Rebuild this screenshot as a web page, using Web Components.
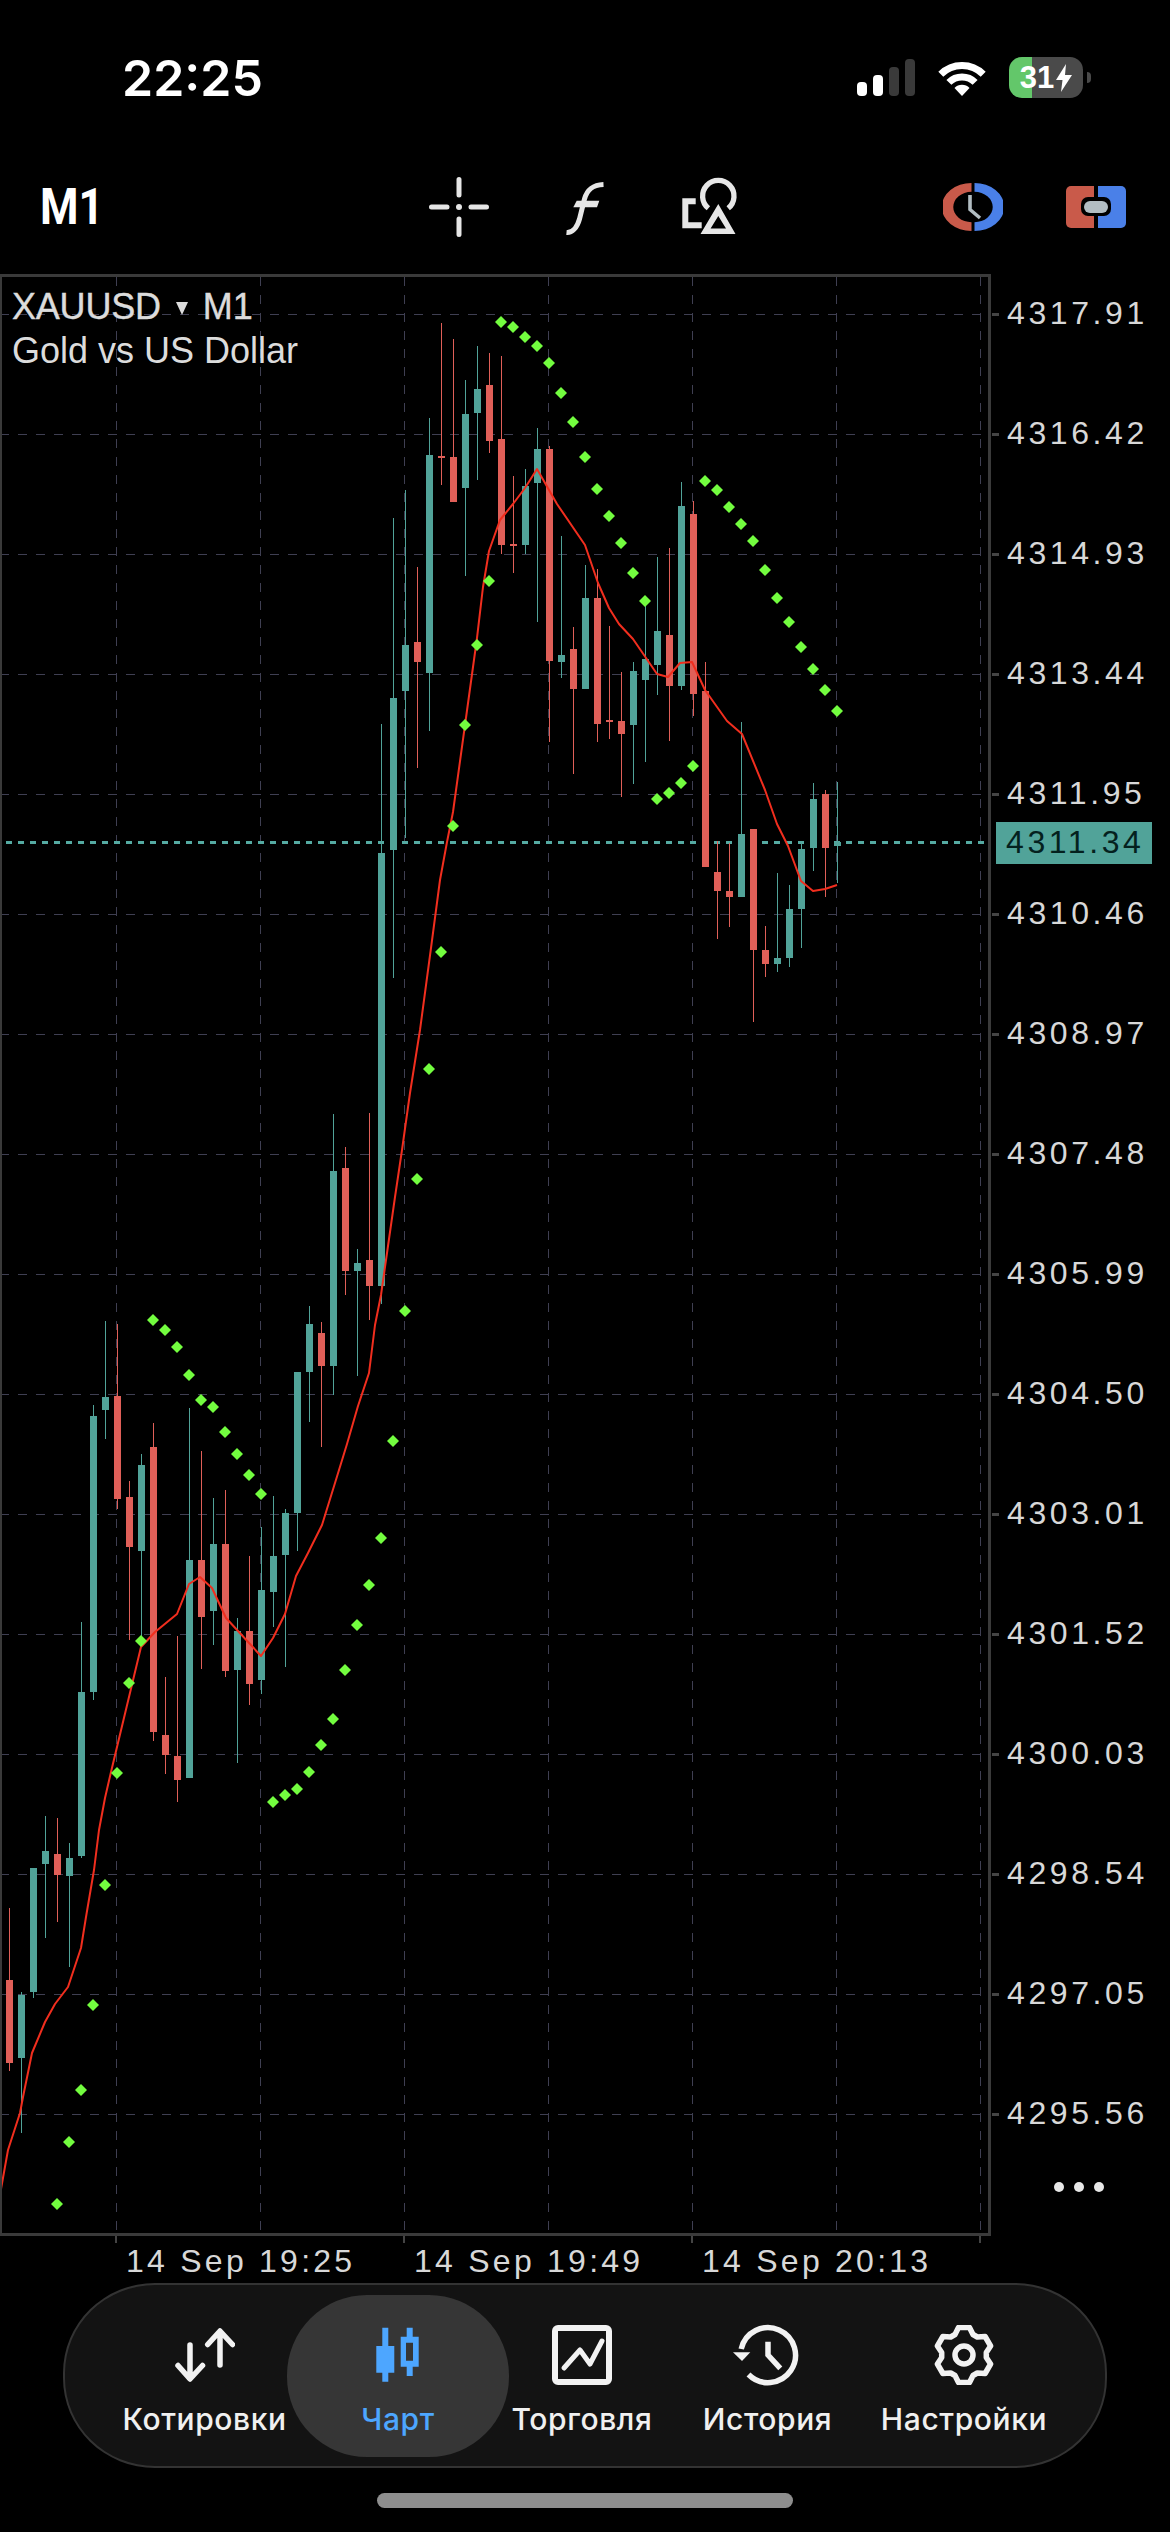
<!DOCTYPE html>
<html lang="ru">
<head>
<meta charset="utf-8">
<title>XAUUSD M1</title>
<style>
  html, body { margin: 0; background: #000; }
  body { width: 1170px; height: 2532px; overflow: hidden; display: flex; flex-direction: column; }
</style>
</head>
<body>
<mt-status-bar></mt-status-bar>
<mt-toolbar></mt-toolbar>
<mt-chart-row>
  <mt-chart symbol="XAUUSD" period="M1" description="Gold vs US Dollar"></mt-chart>
  <mt-price-axis current="4311.34"></mt-price-axis>
</mt-chart-row>
<mt-time-axis></mt-time-axis>
<mt-tab-bar>
  <mt-tab-item>
    <svg slot="icon" width="60" height="60" viewBox="0 0 60 60" fill="none" stroke="#f2f2f2" stroke-width="5.5" stroke-linecap="round" stroke-linejoin="round"><path d="M15 20V53M3 40.5L15 54L27.5 40.5M45 6.5V40M32.7 19.5L45 6L57.5 19.5"/></svg>
    Котировки
  </mt-tab-item>
  <mt-tab-item active>
    <svg slot="icon" width="60" height="60" viewBox="0 0 60 60" fill="#4da6ff"><path d="M14.3 2.7h6V21h6v26.7h-6v9h-6v-9h-6V21h6z"/><path fill-rule="evenodd" d="M38.7 2.7h6v9h6v30h-6V51h-6v-9.3h-6v-30h6zM38 17.7v18h7v-18z"/></svg>
    Чарт
  </mt-tab-item>
  <mt-tab-item>
    <svg slot="icon" width="60" height="60" viewBox="0 0 60 60" fill="none" stroke="#f2f2f2" stroke-linecap="round" stroke-linejoin="round"><rect x="3" y="3" width="54" height="54" rx="3" stroke-width="6"/><path d="M12 43L28 25L38 39L50 16" stroke-width="5"/></svg>
    Торговля
  </mt-tab-item>
  <mt-tab-item>
    <svg slot="icon" width="60" height="60" viewBox="0 0 60 60" style="overflow:visible" fill="none" stroke="#f2f2f2" stroke-width="5.5"><path d="M10.5 49.5A27.5 27.5 0 1 0 3.2 24"/><path d="M30 16.7V30L42.3 43.3"/><path d="M-5 27.3H12.3L4 36Z" fill="#f2f2f2" stroke="none"/></svg>
    История
  </mt-tab-item>
  <mt-tab-item>
    <mt-gear-icon slot="icon"></mt-gear-icon>
    Настройки
  </mt-tab-item>
</mt-tab-bar>
<mt-home-indicator></mt-home-indicator>

<script>
const FONT = '"Liberation Sans", Arial, sans-serif';

class MtStatusBar extends HTMLElement {
  constructor() {
    super();
    this.root = this.attachShadow({ mode: 'open' });
    this.root.innerHTML = `
      <style>
        :host {
          display: flex;
          align-items: center;
          justify-content: space-between;
          flex: none;
          height: 155px;
          padding: 0 79px 0 122px;
        }
        .time {
          font: 600 50px Inter, sans-serif;
          color: #fff;
        }
        .icons {
          display: flex;
          align-items: center;
          gap: 22px;
        }
        .battery-wrap {
          display: flex;
          align-items: center;
          gap: 4px;
        }
        .battery {
          display: flex;
          align-items: center;
          justify-content: center;
          gap: 2px;
          width: 74px;
          height: 41px;
          border-radius: 13px;
          background: linear-gradient(90deg, #63c76a 31%, #4a4a4a 31%);
          color: #fff;
          font: 700 31px ${FONT};
        }
        .nub {
          width: 4px;
          height: 11px;
          border-radius: 0 5px 5px 0;
          background: #4a4a4a;
        }
      </style>
      <div class="time">22:25</div>
      <div class="icons">
        <svg width="58" height="37" viewBox="0 0 58 37">
          <rect x="0" y="23" width="10" height="14" rx="4" fill="#fff"/>
          <rect x="16" y="16" width="10" height="21" rx="4" fill="#fff"/>
          <rect x="32" y="8" width="10" height="29" rx="4" fill="#3a3a3a"/>
          <rect x="48" y="0" width="10" height="37" rx="4" fill="#3a3a3a"/>
        </svg>
        <svg width="50" height="37" viewBox="0 0 50 37">
          <path d="M3.8 15.2A30 30 0 0 1 46.2 15.2" fill="none" stroke="#fff" stroke-width="7"/>
          <path d="M11.9 23.4A18.5 18.5 0 0 1 38.1 23.4" fill="none" stroke="#fff" stroke-width="7"/>
          <path d="M25 37L17.5 29A10.5 10.5 0 0 1 32.5 29Z" fill="#fff"/>
        </svg>
        <div class="battery-wrap">
          <div class="battery">
            <span>31</span>
            <svg width="16" height="28" viewBox="0 0 16 28"><path d="M10 0L0 16H6.5L5 28L16 11H9Z" fill="#fff"/></svg>
          </div>
          <div class="nub"></div>
        </div>
      </div>
    `;
  }
}

class MtToolbar extends HTMLElement {
  constructor() {
    super();
    this.root = this.attachShadow({ mode: 'open' });
    this.root.innerHTML = `
      <style>
        :host {
          display: flex;
          align-items: center;
          flex: none;
          height: 60px;
          padding: 22px 0 37px 40px;
        }
        .period {
          width: 60px;
          font: 700 50px Roboto, sans-serif;
          line-height: 60px;
          color: #fff;
          white-space: nowrap;
          transform: scaleX(.88);
          transform-origin: left center;
        }
        svg { display: block; flex: none; }
      </style>
      <div class="period">M1</div>
      <svg style="margin-left:329px" width="60" height="60" viewBox="0 0 60 60" fill="none" stroke="#e6e6e6" stroke-width="5" stroke-linecap="round">
        <path d="M30 2.5V18M30 42V57.5M2.5 30H18M42 30H57.5"/>
        <circle cx="30" cy="30" r="3" fill="#e6e6e6" stroke="none"/>
      </svg>
      <svg style="margin-left:76px" width="39" height="60" viewBox="154 0 39 60">
        <path d="M192.5 7.5C181 8 176 13 173.5 22L168.500 42C166 51 161 56 155.500 55.500" fill="none" stroke="#e6e6e6" stroke-width="5"/>
        <path d="M165.7 23.700H188.300L186 30.300H162.300Z" fill="#e6e6e6"/>
      </svg>
      <svg style="margin-left:78px" width="56" height="60" viewBox="272 0 56 60">
        <path d="M298.4 48.3A15.7 15.7 0 1 1 318.2 48.3" transform="translate(0 -17)" fill="none" stroke="#e6e6e6" stroke-width="5.3"/>
        <path d="M285.7 24.3H275.3V48.3H291.7" fill="none" stroke="#e6e6e6" stroke-width="6"/>
        <path fill-rule="evenodd" d="M308.3 27L325.5 57H290.5ZM308.3 39L300.6 51.5H316Z" fill="#e6e6e6"/>
      </svg>
      <svg style="margin-left:205px" width="60" height="60" viewBox="0 0 60 60">
        <path d="M28.5 6A29.7 24 0 0 0 28.5 54V45.2A18 15 0 0 1 28.5 14.8Z" fill="#c95a4a"/>
        <path d="M31.5 6A29.7 24 0 0 1 31.5 54V45.2A18 15 0 0 0 31.5 14.8Z" fill="#4a80e8"/>
        <path d="M27 18V32.5L37 41" fill="none" stroke="#b2bdc2" stroke-width="3.6"/>
      </svg>
      <svg style="margin-left:63px" width="60" height="60" viewBox="0 0 60 60">
        <path d="M5 9H28V51H5A5 5 0 0 1 0 46V14A5 5 0 0 1 5 9Z" fill="#c95a4a"/>
        <path d="M32 9H55A5 5 0 0 1 60 14V46A5 5 0 0 1 55 51H32Z" fill="#4a80e8"/>
        <rect x="15" y="20" width="30" height="19" rx="7" fill="#000"/>
        <rect x="18" y="24" width="24" height="12" rx="6" fill="#b2bdc2"/>
      </svg>
    `;
  }
}

class MtChartRow extends HTMLElement {
  constructor() {
    super();
    this.root = this.attachShadow({ mode: 'open' });
    this.root.innerHTML = `
      <style>
        :host {
          display: flex;
          flex: none;
          height: 1962px;
        }
      </style>
      <slot></slot>
    `;
  }
}

// [wick top, wick bottom, body top, body bottom, 'g'|'r'] in page pixels, one per bar
const CANDLES = [
  [1908,2071,1980,2063,'r'],[1992,2133,1995,2058,'g'],[1868,1998,1868,1992,'g'],[1816,1938,1851,1864,'g'],
  [1818,1922,1854,1875,'r'],[1843,1967,1858,1876,'g'],[1622,1858,1692,1856,'g'],[1405,1700,1416,1692,'g'],
  [1321,1439,1397,1410,'g'],[1324,1509,1396,1499,'r'],[1481,1640,1497,1547,'r'],[1454,1645,1465,1551,'g'],
  [1423,1741,1447,1732,'r'],[1677,1774,1735,1755,'r'],[1636,1802,1756,1780,'r'],[1408,1778,1560,1778,'g'],
  [1451,1669,1560,1617,'r'],[1498,1645,1544,1611,'g'],[1490,1677,1544,1671,'r'],[1618,1763,1631,1670,'g'],
  [1556,1705,1631,1684,'r'],[1527,1694,1590,1680,'g'],[1496,1627,1556,1592,'g'],[1509,1667,1513,1555,'g'],
  [1372,1551,1372,1513,'g'],[1306,1422,1324,1372,'g'],[1322,1447,1333,1366,'r'],[1114,1395,1171,1366,'g'],
  [1147,1295,1168,1271,'r'],[1249,1376,1263,1271,'g'],[1113,1320,1260,1286,'r'],[724,1304,853,1286,'g'],
  [518,978,698,850,'g'],[490,838,645,691,'g'],[567,768,642,662,'r'],[418,731,455,673,'g'],
  [323,485,456,458,'r'],[339,502,457,502,'r'],[380,576,414,488,'g'],[346,480,389,413,'g'],
  [353,453,385,441,'r'],[356,554,439,545,'r'],[476,573,544,546,'r'],[469,554,486,545,'g'],
  [428,622,449,483,'g'],[446,742,449,661,'r'],[536,678,655,662,'g'],[627,774,649,689,'r'],
  [565,689,598,689,'g'],[569,742,598,724,'r'],[626,739,720,722,'r'],[672,797,721,734,'r'],
  [662,784,671,725,'g'],[606,762,659,680,'g'],[557,695,631,665,'g'],[548,741,635,686,'r'],
  [482,690,506,686,'g'],[501,716,514,694,'r'],[662,867,691,867,'r'],[841,939,872,891,'r'],
  [843,927,891,897,'r'],[722,897,834,897,'g'],[829,1022,829,950,'r'],[926,977,950,964,'r'],
  [873,972,958,964,'g'],[885,967,909,958,'g'],[843,948,849,909,'g'],[783,871,799,848,'g'],
  [790,897,794,848,'r'],[782,883,842,846,'g']
];

const SAR = [
  [57,2204],[69,2142],[81,2090],[93,2005],[105,1885],[117,1773],[129,1683],[141,1641],
  [153,1320],[165,1330],[177,1347],[189,1375],[201,1400],[213,1407],[225,1432],[237,1454],[249,1475],[261,1494],
  [273,1802],[285,1795],[297,1789],[309,1772],[321,1745],[333,1719],[345,1670],[357,1625],[369,1585],[381,1538],
  [393,1441],[405,1311],[417,1179],[429,1069],[441,952],[453,826],[465,725],[477,645],[489,581],
  [501,322],[513,327],[525,337],[537,346],[549,363],[561,393],[573,422],[585,457],[597,489],[609,516],[621,543],[633,573],[645,601],
  [657,799],[669,793],[681,783],[693,766],
  [705,481],[717,490],[729,507],[741,524],[753,541],[765,570],[777,598],[789,622],[801,647],[813,669],[825,690],[837,711]
];

const MA = [
  [1,2189],[8,2150],[20,2113],[23,2097],[32,2053],[45,2022],[55,2004],[68,1987],[81,1948],[86,1917],[94,1870],[99,1830],
  [105,1798],[111,1772],[141,1647],[155,1632],[177,1614],[189,1584],[200,1577],[212,1588],[226,1618],[261,1656],[273,1638],
  [285,1614],[296,1576],[308,1553],[322,1525],[335,1483],[347,1444],[358,1406],[369,1373],[375,1325],[381,1295],[387,1253],
  [395,1197],[402,1150],[410,1093],[420,1030],[431,948],[440,880],[447,842],[453,812],[465,725],[477,638],[483,587],[489,551],
  [500,520],[513,504],[525,488],[537,469],[557,504],[585,545],[598,583],[609,608],[619,624],[633,639],[657,674],[668,677],
  [680,663],[692,662],[705,690],[727,721],[742,734],[765,790],[777,824],[788,846],[801,881],[813,891],[825,889],[837,885]
];

class MtChart extends HTMLElement {
  constructor() {
    super();
    this.root = this.attachShadow({ mode: 'open' });
    this.root.innerHTML = `
      <style>
        :host {
          display: block;
          position: relative;
          flex: none;
          width: 992px;
          height: 1962px;
        }
        svg { display: block; }
        .legend {
          position: absolute;
          left: 12px;
          top: 11px;
          font: 36px/44px ${FONT};
          color: #dcdcdc;
        }
        .symbol {
          display: flex;
          align-items: center;
          white-space: nowrap;
          -webkit-text-stroke: 0.4px #dcdcdc;
        }
        .name { letter-spacing: -0.2px; }
        .tri {
          width: 0;
          height: 0;
          margin: 3px 15px 0 15px;
          border-left: 6px solid transparent;
          border-right: 6px solid transparent;
          border-top: 13px solid #dcdcdc;
        }
      </style>
      <svg width="992" height="1962" viewBox="0 274 992 1962">${this.draw()}</svg>
      <div class="legend">
        <div class="symbol"><span class="name"></span><span class="tri"></span><span class="period"></span></div>
        <div class="description"></div>
      </div>
    `;
  }

  connectedCallback() {
    this.root.querySelector('.name').textContent = this.getAttribute('symbol');
    this.root.querySelector('.period').textContent = this.getAttribute('period');
    this.root.querySelector('.description').textContent = this.getAttribute('description');
  }

  draw() {
    let out = '<g stroke="#3f3f52" stroke-width="1" stroke-dasharray="9 9" fill="none">';
    for (let k = 0; k < 16; k++) {
      const y = 314.5 + 120 * k;
      out += `<path d="M0 ${y}H981"/>`;
    }
    for (let k = 0; k < 7; k++) {
      const x = 116.5 + 144 * k;
      out += `<path d="M${x} 277V2233"/>`;
    }
    out += '</g>';
    out += '<path d="M6 842.5H988" stroke="#55aaa2" stroke-width="3" stroke-dasharray="6 6" fill="none"/>';

    out += '<g shape-rendering="crispEdges">';
    CANDLES.forEach((c, i) => {
      const x = 9 + 12 * i;
      const fill = c[4] === 'g' ? '#51a399' : '#e05f58';
      out += `<rect x="${x}" y="${c[0]}" width="1" height="${c[1] - c[0]}" fill="${fill}"/>`;
      out += `<rect x="${x - 3}" y="${c[2]}" width="7" height="${Math.max(c[3] - c[2], 2)}" fill="${fill}"/>`;
    });
    out += '</g>';

    const line = MA.map(p => p.join(' ')).join('L');
    out += `<path d="M${line}" fill="none" stroke="#f12e1e" stroke-width="2" stroke-linejoin="round"/>`;

    SAR.forEach(([x, y]) => {
      out += `<path d="M${x} ${y - 6}L${x + 6} ${y}L${x} ${y + 6}L${x - 6} ${y}Z" fill="#73fd3f"/>`;
    });

    // frame on top of everything
    out += '<g fill="#3a3a3a" shape-rendering="crispEdges">';
    out += '<rect x="0" y="274" width="991" height="3"/>';
    out += '<rect x="0" y="2233" width="991" height="3"/>';
    out += '<rect x="0" y="274" width="2" height="1962"/>';
    out += '<rect x="988" y="274" width="3" height="1962"/>';
    out += '</g>';
    return out;
  }
}

class MtPriceAxis extends HTMLElement {
  constructor() {
    super();
    this.root = this.attachShadow({ mode: 'open' });
    this.root.innerHTML = `
      <style>
        :host {
          display: flex;
          flex-direction: column;
          flex: 1;
          position: relative;
          padding-top: 20px;
          font: 32px/40px ${FONT};
          letter-spacing: 3.6px;
          color: #d8d8d8;
        }
        .row {
          display: flex;
          align-items: center;
          height: 40px;
          margin-bottom: 80px;
        }
        .tick {
          width: 7px;
          height: 3px;
          margin-right: 8px;
          background: #444;
        }
        .value { margin-bottom: 3px; }
        .current {
          position: absolute;
          left: 4px;
          top: 548px;
          width: 146px;
          height: 42px;
          padding-left: 10px;
          background: #51a399;
          color: #04211e;
          line-height: 41px;
        }
        .more {
          display: flex;
          gap: 10px;
          margin: -32px 0 0 62px;
        }
        .more span {
          width: 10px;
          height: 10px;
          border-radius: 50%;
          background: #e8e8e8;
        }
      </style>
      <div class="rows"></div>
      <div class="current"></div>
      <div class="more"><span></span><span></span><span></span></div>
    `;
  }

  connectedCallback() {
    this.root.querySelector('.current').textContent = this.getAttribute('current');
    const rows = this.root.querySelector('.rows');
    for (let k = 0; k < 16; k++) {
      const row = document.createElement('div');
      row.className = 'row';
      row.innerHTML = `<span class="tick"></span><span class="value">${(4317.91 - 1.49 * k).toFixed(2)}</span>`;
      rows.appendChild(row);
    }
  }
}

class MtTimeAxis extends HTMLElement {
  constructor() {
    super();
    this.root = this.attachShadow({ mode: 'open' });
    this.root.innerHTML = `
      <style>
        :host {
          display: flex;
          flex: none;
          height: 47px;
          padding-left: 115px;
          font: 32px/36px ${FONT};
          letter-spacing: 3.25px;
          color: #d8d8d8;
        }
        .cell {
          flex: none;
          width: 288px;
          white-space: nowrap;
        }
        .cell:last-child { width: 2px; }
        .tick {
          width: 2px;
          height: 7px;
          background: #444;
        }
        .label {
          margin: 0 0 0 11px;
        }
      </style>
      <div class="cell"><div class="tick"></div><div class="label">14 Sep 19:25</div></div>
      <div class="cell"><div class="tick"></div><div class="label">14 Sep 19:49</div></div>
      <div class="cell"><div class="tick"></div><div class="label">14 Sep 20:13</div></div>
      <div class="cell"><div class="tick"></div></div>
    `;
  }
}

class MtTabBar extends HTMLElement {
  constructor() {
    super();
    this.root = this.attachShadow({ mode: 'open' });
    this.root.innerHTML = `
      <style>
        :host {
          display: grid;
          grid-template-columns: 165px 222px 146px 225px 168px;
          align-items: center;
          flex: none;
          box-sizing: border-box;
          width: 1044px;
          height: 185px;
          margin-left: 63px;
          padding-left: 57px;
          border: 2px solid #333;
          border-radius: 92px / 90px;
          background: #131313;
        }
      </style>
      <slot></slot>
    `;
  }
}

class MtTabItem extends HTMLElement {
  constructor() {
    super();
    this.root = this.attachShadow({ mode: 'open' });
    this.root.innerHTML = `
      <style>
        :host {
          display: flex;
          flex-direction: column;
          align-items: center;
          box-sizing: border-box;
          height: 162px;
          padding-top: 30px;
          border-radius: 80px;
          color: #f0f0f0;
          font: 500 30px/40px Inter, sans-serif;
          letter-spacing: 0.6px;
          white-space: nowrap;
        }
        :host([active]) {
          background: #363636;
          color: #4da6ff;
        }
        .icon {
          display: block;
          height: 60px;
          margin-bottom: 14px;
        }
      </style>
      <div class="icon"><slot name="icon"></slot></div>
      <slot></slot>
    `;
  }
}

class MtGearIcon extends HTMLElement {
  constructor() {
    super();
    this.root = this.attachShadow({ mode: 'open' });
    const pts = [];
    for (let t = 0; t < 6; t++) {
      const a = (-90 + 60 * t) * Math.PI / 180;
      const at = (r, w) => [
        30 + r * Math.cos(a) - w * Math.sin(a),
        30 + r * Math.sin(a) + w * Math.cos(a)
      ].map(n => n.toFixed(1)).join(' ');
      pts.push(at(20.5, -9), at(27.5, -5.5), at(27.5, 5.5), at(20.5, 9));
    }
    this.root.innerHTML = `
      <style>
        :host { display: block; width: 60px; height: 60px; }
        svg { display: block; }
      </style>
      <svg width="60" height="60" viewBox="0 0 60 60" fill="none" stroke="#f2f2f2" stroke-width="5.5" stroke-linejoin="round">
        <path d="M${pts.join('L')}Z"/>
        <circle cx="30" cy="30" r="9"/>
      </svg>
    `;
  }
}

class MtHomeIndicator extends HTMLElement {
  constructor() {
    super();
    this.root = this.attachShadow({ mode: 'open' });
    this.root.innerHTML = `
      <style>
        :host {
          display: block;
          flex: none;
          width: 416px;
          height: 15px;
          margin: 25px 0 0 377px;
          border-radius: 8px;
          background: #8e8e8e;
        }
      </style>
    `;
  }
}

customElements.define('mt-status-bar', MtStatusBar);
customElements.define('mt-toolbar', MtToolbar);
customElements.define('mt-chart-row', MtChartRow);
customElements.define('mt-chart', MtChart);
customElements.define('mt-price-axis', MtPriceAxis);
customElements.define('mt-time-axis', MtTimeAxis);
customElements.define('mt-tab-bar', MtTabBar);
customElements.define('mt-tab-item', MtTabItem);
customElements.define('mt-gear-icon', MtGearIcon);
customElements.define('mt-home-indicator', MtHomeIndicator);
</script>
</body>
</html>
